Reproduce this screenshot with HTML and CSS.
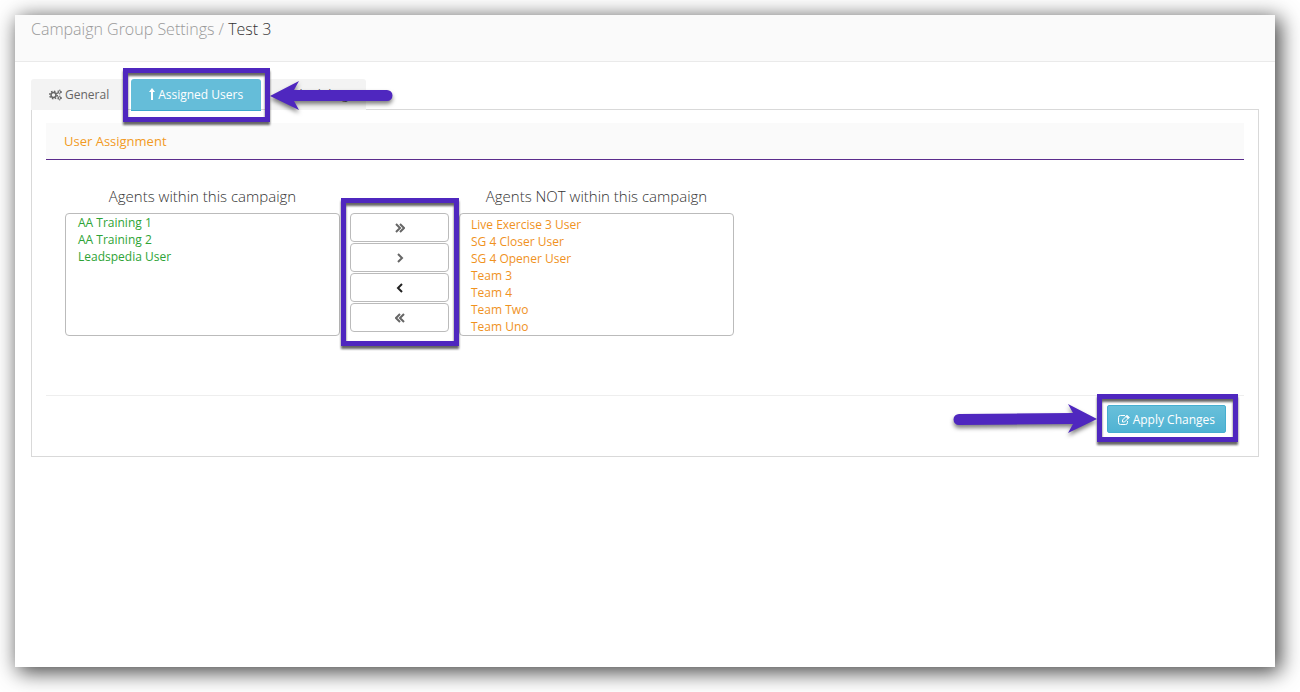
FILE: index.html
```html
<!DOCTYPE html>
<html lang="en">
<head>
    <meta charset="UTF-8">
    <meta name="viewport" content="width=device-width, initial-scale=1.0">
    <title>Campaign Group Settings</title>
    <link rel="stylesheet" href="styles.css">
</head>
<body>
    <div class="window">
        <header class="page-header">
            <h1>Campaign Group Settings / <span>Test 3</span></h1>
        </header>

        <main>
            <nav class="tabs">
                <a href="#general" class="tab">
                    <svg viewBox="0 0 26 24" width="13" height="12" fill="none" stroke="currentColor">
                        <circle cx="9" cy="12" r="5" stroke-width="3"/>
                        <circle cx="9" cy="12" r="7.500" stroke-width="3" stroke-dasharray="3 2.890"/>
                        <circle cx="21" cy="6" r="2.500" stroke-width="2"/>
                        <circle cx="21" cy="6" r="4" stroke-width="2" stroke-dasharray="2 2.190"/>
                        <circle cx="21" cy="18" r="2.500" stroke-width="2"/>
                        <circle cx="21" cy="18" r="4" stroke-width="2" stroke-dasharray="2 2.190"/>
                    </svg>
                    General
                </a>
                <div class="highlight highlight-tab">
                    <a href="#users" class="tab active">
                        <svg viewBox="0 0 6 13" width="6" height="13">
                            <path d="M3 0L6 4H4V12H2V4H0Z" fill="currentColor"/>
                        </svg>
                        Assigned Users
                    </a>
                    <svg class="arrow arrow-left" viewBox="0 0 124 30" width="124" height="30">
                        <path d="M0 15L29 0L24 9H117A5 5 0 0 1 117 20H24L29 29Z" fill="#4f27bf"/>
                    </svg>
                </div>
                <a href="#scheduling" class="tab">Scheduling</a>
            </nav>

            <form class="panel" id="assignForm">
                <h2>User Assignment</h2>

                <div class="assignment">
                    <div class="agents">
                        <label for="assigned">Agents within this campaign</label>
                        <select id="assigned" name="assigned" class="list assigned" multiple>
                            <option>AA Training 1</option>
                            <option>AA Training 2</option>
                            <option>Leadspedia User</option>
                        </select>
                    </div>

                    <div class="highlight highlight-move">
                        <button type="button" aria-label="Move all right">
                            <svg viewBox="0 0 10 10" width="10" height="10"><path d="M1 1L5 5L1 9M5 1L9 5L5 9"/></svg>
                        </button>
                        <button type="button" aria-label="Move right">
                            <svg viewBox="0 0 10 10" width="10" height="10"><path d="M3 1L7 5L3 9"/></svg>
                        </button>
                        <button type="button" class="current" aria-label="Move left">
                            <svg viewBox="0 0 10 10" width="10" height="10"><path d="M7 1L3 5L7 9"/></svg>
                        </button>
                        <button type="button" aria-label="Move all left">
                            <svg viewBox="0 0 10 10" width="10" height="10"><path d="M5 1L1 5L5 9M9 1L5 5L9 9"/></svg>
                        </button>
                    </div>

                    <div class="agents">
                        <label for="available">Agents NOT within this campaign</label>
                        <select id="available" name="available" class="list available" multiple>
                            <option>Live Exercise 3 User</option>
                            <option>SG 4 Closer User</option>
                            <option>SG 4 Opener User</option>
                            <option>Team 3</option>
                            <option>Team 4</option>
                            <option>Team Two</option>
                            <option>Team Uno</option>
                        </select>
                    </div>
                </div>

                <div class="actions">
                    <div class="highlight highlight-apply">
                        <button type="submit" class="apply">
                            <svg viewBox="0 0 24 22" width="12" height="11" fill="none" stroke="currentColor">
                                <path d="M14 3H5Q1 3 1 7V17Q1 21 5 21H15Q19 21 19 17V14" stroke-width="2"/>
                                <path d="M9 12L18 3L22 7L13 16H9Z" stroke-width="2"/>
                                <path d="M16 5L20 9L22 7L18 3Z" fill="currentColor" stroke-width="2"/>
                            </svg>
                            Apply Changes
                        </button>
                        <svg class="arrow arrow-right" viewBox="0 0 144 30" width="144" height="30">
                            <path d="M144 15L115 0L120 9L6 10A5 5 0 0 0 6 21L120 20L115 29Z" fill="#4f27bf"/>
                        </svg>
                    </div>
                </div>
            </form>
        </main>
    </div>
</body>
</html>
```

FILE: styles.css
```css
* {
    box-sizing: border-box;
}
body {
    margin: 0;
    padding: 15px 25px 25px 15px;
    min-height: 100vh;
    display: flex;
    background-color: #fff;
    font-family: "Open Sans", sans-serif;
    font-size: 12px;
    color: #555;
    overflow: hidden;
}
.window {
    flex: 1;
    background-color: #fff;
    box-shadow: 4px 4px 20px 1px rgba(0, 0, 0, 0.75);
}
.page-header {
    height: 47px;
    padding: 3px 16px;
    background-color: #fafafa;
    border-bottom: 1px solid #eaeaea;
}
h1 {
    margin: 0;
    font-size: 16px;
    line-height: 22px;
    font-weight: 300;
    color: #999;
}
h1 span {
    color: #333;
}
main {
    padding: 17px 16px;
}
.tabs {
    display: flex;
    align-items: flex-start;
    height: 30px;
}
.tab {
    display: flex;
    align-items: center;
    gap: 3px;
    height: 31px;
    padding: 0 18px;
    border-radius: 3px 3px 0 0;
    background-color: #f3f3f3;
    color: #666;
    text-decoration: none;
}
.tab.active {
    height: 32px;
    background-color: #65bdd9;
    border-bottom: 1px solid #3ba8cd;
    color: #fff;
    font-weight: 500;
}
.panel {
    padding: 13px 14px 14px;
    border: 1px solid #d9d9d9;
}
h2 {
    margin: 0;
    height: 37px;
    padding: 0 18px;
    font-size: 13px;
    line-height: 36px;
    font-weight: 400;
    color: #f29a24;
    background-color: #fafafa;
    border-bottom: 1px solid #5b2c8c;
}
.assignment {
    display: flex;
    align-items: flex-end;
    height: 176px;
    padding-left: 19px;
}
.agents {
    width: 275px;
}
.agents label {
    display: block;
    font-size: 15px;
    line-height: 20px;
    font-weight: 300;
    text-align: center;
    color: #333;
    margin-bottom: 7px;
}
.list {
    display: block;
    width: 100%;
    height: 123px;
    border: 1px solid #bbb;
    border-radius: 4px;
    background-color: #fff;
    font-family: inherit;
    font-size: 12px;
    overflow: hidden;
    outline: none;
}
.list option {
    min-height: 17px;
    line-height: 17px;
    padding: 0;
}
.assigned {
    padding: 0 12px;
}
.assigned option {
    color: #2ea336;
}
.available {
    padding: 2px 11px;
}
.available option {
    color: #f0921e;
    font-weight: 500;
}

/* purple call-out boxes */
.highlight {
    position: relative;
}
.highlight::after {
    content: "";
    position: absolute;
    border: 5px solid #4f27bf;
    filter: drop-shadow(0 3px 1px rgba(0, 0, 0, 0.6));
    pointer-events: none;
}
.highlight-tab {
    margin: 0 8px 0 4px;
    z-index: 1;
}
.highlight-tab::after {
    inset: -11px -9px -11px -8px;
}
.highlight-move {
    width: 119px;
    height: 123px;
    padding: 0 10px;
}
.highlight-move::after {
    inset: -15px 0 -10px 1px;
}
.highlight-move button {
    display: flex;
    align-items: center;
    justify-content: center;
    width: 100%;
    height: 29px;
    margin-bottom: 1px;
    padding: 0;
    border: 1px solid #bbb;
    border-radius: 4px;
    background-color: #fff;
    color: #666;
}
.highlight-move .current {
    color: #222;
}
.highlight-move path {
    fill: none;
    stroke: currentColor;
    stroke-width: 2;
}
.actions {
    display: flex;
    justify-content: flex-end;
    margin-top: 59px;
    padding: 9px 18px;
    border-top: 1px solid #eee;
}
.apply {
    display: flex;
    align-items: center;
    gap: 3px;
    height: 28px;
    padding: 0 10px;
    border: 1px solid #45aed0;
    border-radius: 2px;
    background: linear-gradient(#68c0da, #50b3d3);
    color: #fff;
    font-family: inherit;
    font-size: 12px;
    font-weight: 500;
}
.highlight-apply::after {
    inset: -11px -12px -9px -10px;
}
.arrow {
    position: absolute;
    filter: drop-shadow(0 3px 2px rgba(0, 0, 0, 0.5));
    overflow: visible;
}
.arrow-left {
    left: calc(100% + 9px);
    top: 2px;
}
.arrow-right {
    right: calc(100% + 10px);
    top: -1px;
}
```
